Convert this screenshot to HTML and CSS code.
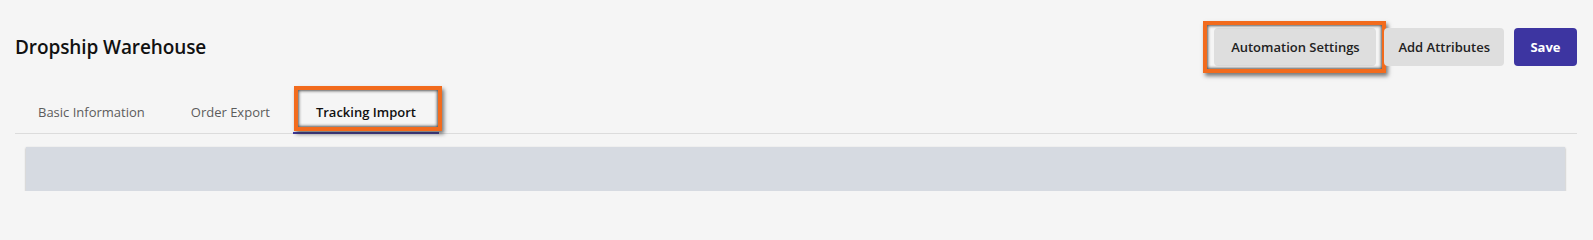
FILE: index.html
```html
<!DOCTYPE html>
<html lang="en">
<head>
<meta charset="utf-8">
<title>Dropship Warehouse</title>
<link rel="stylesheet" href="styles.css">
</head>
<body>
<div class="page">
  <header class="header">
    <h1 class="title">Dropship Warehouse</h1>
    <div class="actions">
      <button class="btn btn-gray highlighted">Automation Settings<span class="annot annot-btn"></span></button>
      <button class="btn btn-gray">Add Attributes</button>
      <button class="btn btn-primary">Save</button>
    </div>
  </header>
  <nav class="tabs">
    <a class="tab">Basic Information</a>
    <a class="tab">Order Export</a>
    <a class="tab active highlighted">Tracking Import<span class="annot annot-tab"></span></a>
  </nav>
  <section class="panel"></section>
</div>
</body>
</html>
```
FILE: styles.css
```css
html, body {
  margin: 0;
  padding: 0;
  background: #f5f5f5;
}
body {
  font-family: "Open Sans", "Liberation Sans", sans-serif;
  color: #1f1f1f;
}
.page {
  padding: 28px 16px 0 15px;
}
.header {
  display: flex;
  justify-content: space-between;
  align-items: center;
  height: 38px;
}
.title {
  margin: 0;
  font-size: 19px;
  font-weight: 600;
  color: #111;
  letter-spacing: -0.1px;
}
.actions {
  display: flex;
  gap: 8px;
  align-items: center;
}
.btn {
  position: relative;
  height: 38px;
  border: none;
  border-radius: 4px;
  font-family: "Open Sans", "Liberation Sans", sans-serif;
  font-size: 13px;
  font-weight: 600;
  padding: 0 14px;
  cursor: pointer;
}
.btn-gray {
  background: #dedede;
  color: #222;
}
.btn-gray.highlighted {
  width: 162px;
}
.btn-primary {
  background: #3d35a1;
  color: #fff;
  font-weight: 700;
  width: 63px;
  margin-left: 2px;
}
.tabs {
  display: flex;
  margin-top: 27px;
  border-bottom: 1px solid #dcdcdc;
}
.tab {
  position: relative;
  padding: 9px 23px 10px;
  font-size: 13px;
  line-height: 20px;
  color: #5c5c5c;
  border-bottom: 2px solid transparent;
  margin-bottom: -1px;
}
.tab.active {
  color: #111;
  font-weight: 600;
  border-bottom-color: #3d35a1;
}
.annot {
  position: absolute;
  border: 4px solid #f26b1d;
  box-shadow: inset 0 0 3px 1px rgba(50, 50, 50, 0.8), 2px 3px 4px rgba(50, 50, 50, 0.65);
  pointer-events: none;
}
.annot-btn {
  left: -11px;
  right: -10px;
  top: -7px;
  bottom: -7px;
}
.annot-tab {
  left: 1px;
  right: -3px;
  top: -7px;
  bottom: 1px;
}
.panel {
  margin: 13px 12px 0 11px;
  height: 44px;
  background: #d6dae1;
  box-shadow: 0 1px 2px rgba(0, 0, 0, 0.35);
}
```
